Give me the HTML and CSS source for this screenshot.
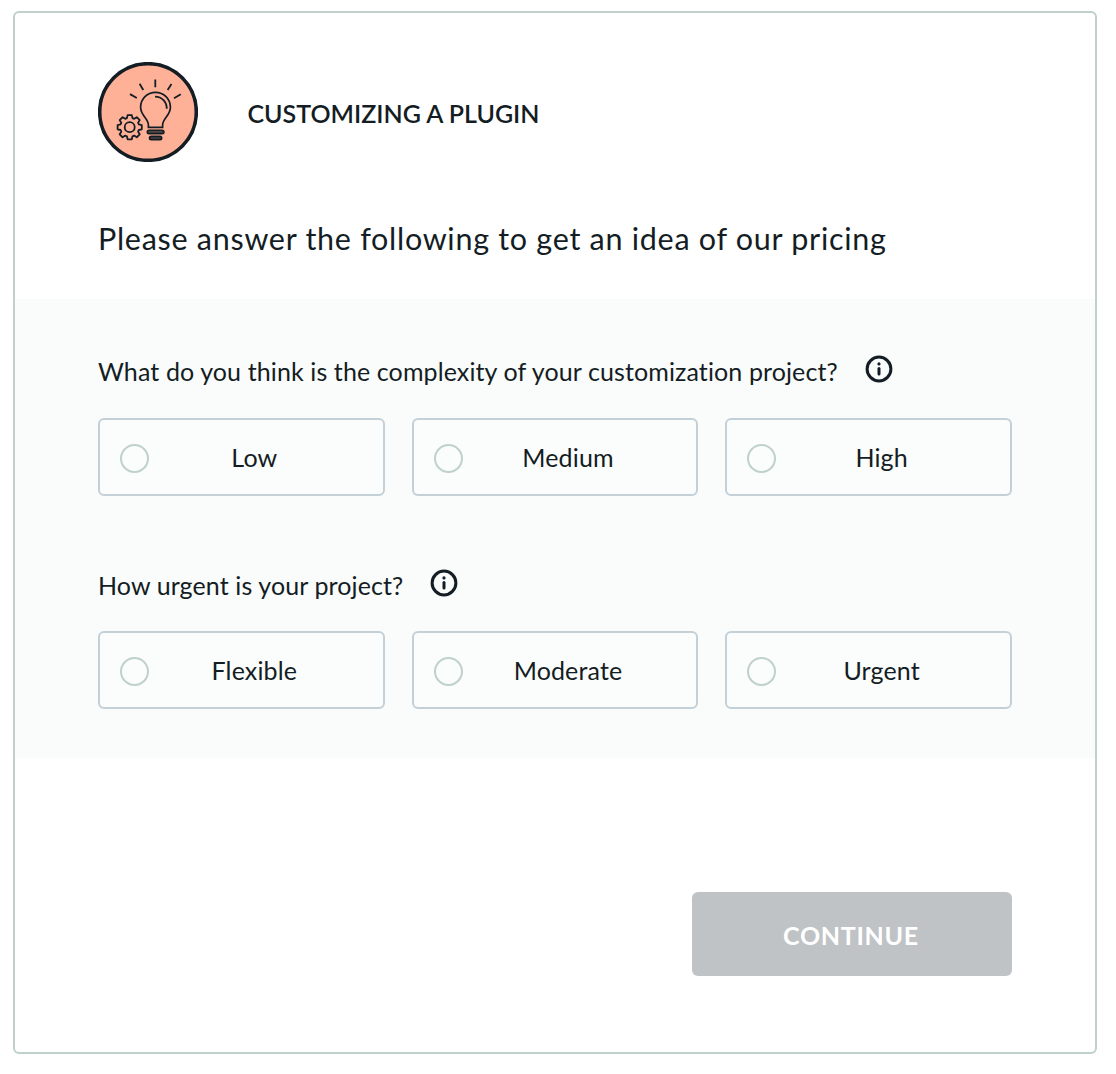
FILE: index.html
```html
<!DOCTYPE html>
<html lang="en">
<head>
<meta charset="utf-8">
<title>Customizing a plugin</title>
<link rel="stylesheet" href="styles.css">
</head>
<body>
<main class="card">
  <header class="header">
    <div class="brand">
      <svg class="badge" viewBox="0 0 100 100" fill="none" stroke="#141d23" stroke-width="1.8">
        <circle cx="50" cy="50" r="48.3" fill="#ffb198" stroke-width="3.6"/>
        <path d="M57.3 17.6V25.2M41.6 21.8L45.3 28M32 32.1L38.8 36M73.5 22L69.6 28M82.8 32.3L76 36.2"/>
        <path d="M50.4 65.3V63C50.4 56.5 42.6 53.5 42.6 45.2A14.9 14.9 0 0 1 72.4 45.2C72.4 53.5 64.6 56.5 64.6 63V65.3Z" stroke-width="1.7"/>
        <path d="M57 34.6C64 34.6 68.8 40 68.8 46.8"/>
        <rect x="49.4" y="68.3" width="16.4" height="3.2" rx="1.6" fill="#6b5852"/>
        <rect x="51.6" y="74.4" width="12" height="3.2" rx="1.6" fill="#49413f"/>
        <g transform="translate(31.7 65.2)">
          <path stroke-linejoin="round" d="M9.1 -2.8L12.1 -2.1V2.1L9.1 2.8L8.4 4.45L10.05 7.1L7.1 10.05L4.45 8.4L2.8 9.1L2.1 12.1H-2.1L-2.8 9.1L-4.45 8.4L-7.1 10.05L-10.05 7.1L-8.4 4.45L-9.1 2.8L-12.1 2.1V-2.1L-9.1 -2.8L-8.4 -4.45L-10.05 -7.1L-7.1 -10.05L-4.45 -8.4L-2.8 -9.1L-2.1 -12.1H2.1L2.8 -9.1L4.45 -8.4L7.1 -10.05L10.05 -7.1L8.4 -4.45Z"/>
          <circle r="5"/>
        </g>
      </svg>
      <h1 class="title">CUSTOMIZING A PLUGIN</h1>
    </div>
    <p class="lead">Please answer the following to get an idea of our pricing</p>
  </header>

  <section class="questions">
    <div class="question">
      <div class="prompt">
        <span class="prompt-text">What do you think is the complexity of your customization project?</span>
        <svg class="info" viewBox="0 0 28 28"><circle cx="14" cy="14" r="11.9" fill="none" stroke="#141d23" stroke-width="3"/><circle cx="14" cy="8.9" r="1.6" fill="#141d23"/><path d="M14 13.4V19" stroke="#141d23" stroke-width="3" stroke-linecap="round"/></svg>
      </div>
      <div class="options">
        <div class="option"><span class="radio"></span><span class="label">Low</span></div>
        <div class="option"><span class="radio"></span><span class="label">Medium</span></div>
        <div class="option"><span class="radio"></span><span class="label">High</span></div>
      </div>
    </div>
    <div class="question">
      <div class="prompt">
        <span class="prompt-text">How urgent is your project?</span>
        <svg class="info" viewBox="0 0 28 28"><circle cx="14" cy="14" r="11.9" fill="none" stroke="#141d23" stroke-width="3"/><circle cx="14" cy="8.9" r="1.6" fill="#141d23"/><path d="M14 13.4V19" stroke="#141d23" stroke-width="3" stroke-linecap="round"/></svg>
      </div>
      <div class="options">
        <div class="option"><span class="radio"></span><span class="label">Flexible</span></div>
        <div class="option"><span class="radio"></span><span class="label">Moderate</span></div>
        <div class="option"><span class="radio"></span><span class="label">Urgent</span></div>
      </div>
    </div>
  </section>

  <footer class="footer">
    <button class="continue" disabled>CONTINUE</button>
  </footer>
</main>
</body>
</html>
```
FILE: styles.css
```css
* { box-sizing: border-box; }
body {
  margin: 0;
  padding: 11px 19px 20px 13px;
  background: #fff;
  color: #141d23;
  font-family: Lato, "Liberation Sans", sans-serif;
}
.card {
  height: 1043px;
  border: 2px solid #c0d0cc;
  border-radius: 6px;
  background: #fff;
}
.header {
  height: 286px;
  padding: 49px 83px 0;
}
.brand {
  display: flex;
  align-items: center;
  gap: 49.5px;
  height: 100px;
}
.badge { width: 100px; height: 100px; flex: none; }
.title {
  margin: 2px 0 0;
  font-size: 25px;
  line-height: 32px;
  font-weight: 600;
  letter-spacing: 0;
  white-space: nowrap;
}
.lead {
  margin: 56px 0 0;
  font-size: 30.5px;
  line-height: 40px;
  letter-spacing: 0.72px;
  white-space: nowrap;
}
.questions {
  height: 459px;
  padding: 56px 83px 0;
  background: #fafbfb;
}
.question { height: 213.5px; }
.prompt {
  display: flex;
  align-items: flex-start;
  gap: 27px;
  height: 62.5px;
}
.prompt-text {
  font-size: 25px;
  line-height: 32px;
  letter-spacing: 0.11px;
  white-space: nowrap;
}
.info { width: 28px; height: 28px; flex: none; }
.options {
  display: grid;
  grid-template-columns: repeat(3, 1fr);
  gap: 27px;
}
.option {
  display: flex;
  align-items: center;
  height: 78px;
  padding: 0 20px;
  border: 2px solid #c3d0d8;
  border-radius: 6px;
  background: #fbfcfc;
}
.radio {
  flex: none;
  width: 29px;
  height: 29px;
  margin-top: 3px;
  border: 2px solid #bfd1cb;
  border-radius: 50%;
}
.label {
  flex: 1;
  padding-right: 3px;
  text-align: center;
  font-size: 25px;
  line-height: 32px;
  letter-spacing: 0.15px;
}
.footer {
  display: flex;
  justify-content: flex-end;
  padding: 134px 83px 0;
}
.continue {
  width: 320px;
  height: 84px;
  padding: 1px 2px 0 0;
  border: 0;
  border-radius: 6px;
  background: #bfc3c6;
  color: #fff;
  font: 700 25px/32px Lato, "Liberation Sans", sans-serif;
  letter-spacing: 0.7px;
}
```
